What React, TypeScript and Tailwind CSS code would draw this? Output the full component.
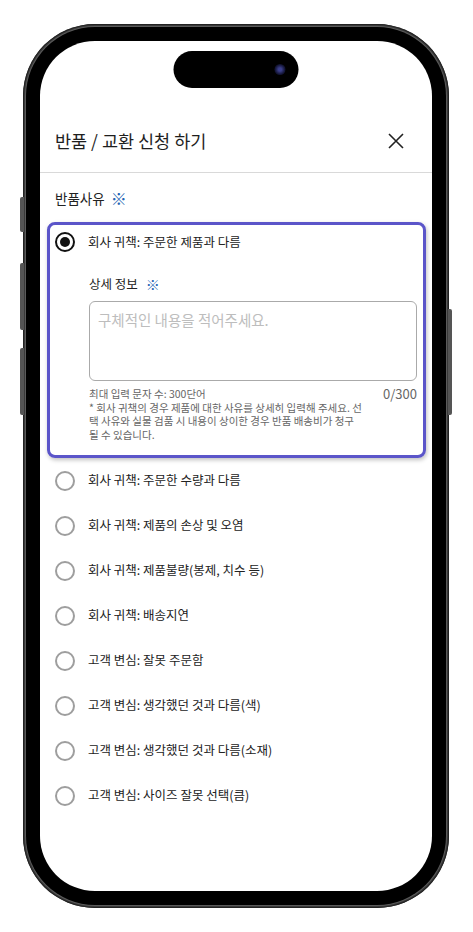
import { useState } from "react";

const reasons = [
  "회사 귀책: 주문한 제품과 다름",
  "회사 귀책: 주문한 수량과 다름",
  "회사 귀책: 제품의 손상 및 오염",
  "회사 귀책: 제품불량(봉제, 치수 등)",
  "회사 귀책: 배송지연",
  "고객 변심: 잘못 주문함",
  "고객 변심: 생각했던 것과 다름(색)",
  "고객 변심: 생각했던 것과 다름(소재)",
  "고객 변심: 사이즈 잘못 선택(큼)",
];

const font = { fontFamily: '"Noto Sans CJK KR", "Noto Sans", sans-serif' };

function Radio({ checked }: { checked: boolean }) {
  return checked ? (
    <span className="grid h-[20px] w-[20px] shrink-0 place-items-center rounded-full border-[2.5px] border-[#111]">
      <span className="h-[10px] w-[10px] rounded-full bg-[#111]" />
    </span>
  ) : (
    <span className="h-[20px] w-[20px] shrink-0 rounded-full border-2 border-[#9e9e9e]" />
  );
}

export default function App() {
  const [selected, setSelected] = useState(0);
  const [text, setText] = useState("");

  return (
    <div className="relative h-[932px] w-[473px] bg-white pl-[23px] pt-[24px]" style={font}>
      {/* side buttons */}
      <span className="absolute left-[20px] top-[197px] h-[35px] w-[4px] rounded-l-[2px] bg-[#555]" />
      <span className="absolute left-[20px] top-[263px] h-[67px] w-[4px] rounded-l-[2px] bg-[#555]" />
      <span className="absolute left-[20px] top-[348px] h-[67px] w-[4px] rounded-l-[2px] bg-[#555]" />
      <span className="absolute left-[448px] top-[309px] h-[106px] w-[4px] rounded-r-[2px] bg-[#555]" />

      <div className="h-[884px] w-[426px] rounded-[72px] bg-[#3a3a3a] p-[3px] shadow-[0_0_0_1px_#222_inset]">
        <div className="h-full w-full rounded-[69px] bg-black p-[14px] shadow-[0_0_0_1px_#5a5a5a]">
          <div className="relative flex h-full w-full flex-col overflow-hidden rounded-[55px] bg-white">
            {/* dynamic island */}
            <div className="absolute left-1/2 top-[10px] flex h-[37px] w-[125px] -translate-x-1/2 items-center justify-end rounded-full bg-black pr-[13px]">
              <span className="h-[11px] w-[11px] rounded-full bg-[radial-gradient(circle,#3b3f8a_20%,#15173a_60%,#050510_100%)]" />
            </div>

            {/* header */}
            <div className="border-b border-[#d9d9d9] pb-[9px] pt-[78px]">
              <div className="flex h-[44px] items-center justify-between pl-[15px] pr-[28px]">
                <h1 className="text-[17.5px] text-[#1e1e1e]">반품 / 교환 신청 하기</h1>
                <svg width="16" height="16" viewBox="0 0 16 16" fill="none" stroke="#222" strokeWidth="1.6">
                  <path d="M1 1L15 15M15 1L1 15" />
                </svg>
              </div>
            </div>

            <div className="px-[15px] pt-[15px]">
              <div className="flex h-[20px] items-center gap-[6px] text-[13.5px] text-[#222]">
                반품사유 <span className="text-[16px] font-bold leading-[20px] text-[#2363b2]">※</span>
              </div>
            </div>

            <div className="mt-[14px] flex flex-col">
              {reasons.map((r, i) =>
                i === selected ? (
                  <div
                    key={r}
                    className="mx-[7px] mr-[6px] rounded-[8px] border-[3px] border-[#5b55c9] pb-[14px] pl-[5px] pr-[6px] pt-[7px] shadow-[1px_2px_4px_rgba(0,0,0,0.25)]"
                  >
                    <button type="button" className="flex h-[20px] items-center gap-[13px]" onClick={() => setSelected(i)}>
                      <Radio checked />
                      <span className="text-[12.5px] text-[#222]">{r}</span>
                    </button>
                    <div className="pl-[34px] pt-[22px]">
                      <div className="flex h-[20px] items-center gap-[8px] text-[12.5px] text-[#222]">
                        상세 정보 <span className="text-[14px] font-bold leading-[20px] text-[#2363b2]">※</span>
                      </div>
                      <textarea
                        value={text}
                        maxLength={300}
                        onChange={(e) => setText(e.target.value)}
                        placeholder="구체적인 내용을 적어주세요."
                        className="mt-[7px] block h-[80px] w-full resize-none rounded-[6px] border border-[#aaaaaa] px-[8px] pt-[8px] text-[14.5px] leading-[20px] text-[#222] outline-none placeholder:text-[#bdbdbd]"
                      />
                      <div className="mt-[6px] flex justify-between text-[#666]">
                        <div className="flex flex-col text-[10.5px] leading-[13.5px]">
                          <span className="whitespace-nowrap">최대 입력 문자 수: 300단어</span>
                          <span className="whitespace-nowrap">* 회사 귀책의 경우 제품에 대한 사유를 상세히 입력해 주세요. 선</span>
                          <span className="whitespace-nowrap">택 사유와 실물 검품 시 내용이 상이한 경우 반품 배송비가 청구</span>
                          <span className="whitespace-nowrap">될 수 있습니다.</span>
                        </div>
                        <span className="text-[13px] leading-[14px]">{text.length}/300</span>
                      </div>
                    </div>
                  </div>
                ) : (
                  <button
                    key={r}
                    type="button"
                    onClick={() => setSelected(i)}
                    className="flex h-[45px] items-center gap-[13px] pl-[15px] text-left"
                  >
                    <Radio checked={false} />
                    <span className="text-[12.5px] text-[#222]">{r}</span>
                  </button>
                )
              )}
            </div>
          </div>
        </div>
      </div>
    </div>
  );
}
